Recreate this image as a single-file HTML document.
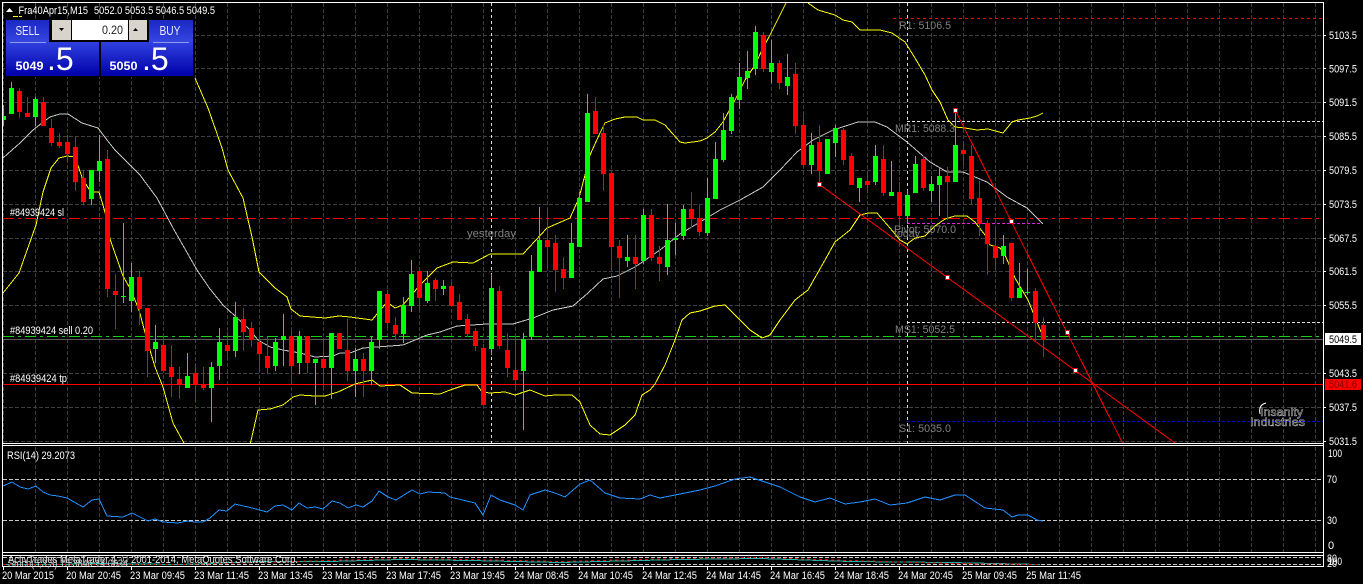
<!DOCTYPE html>
<html><head><meta charset="utf-8"><title>MetaTrader chart</title>
<style>
html,body{margin:0;padding:0;background:#000;width:1363px;height:584px;overflow:hidden}
svg{display:block}
text{font-family:"Liberation Sans",sans-serif;font-size:11px;fill:#fff}
.g{fill:#808080}
</style></head><body>
<svg width="1363" height="584" viewBox="0 0 1363 584" xmlns="http://www.w3.org/2000/svg" shape-rendering="crispEdges">
<defs>
<linearGradient id="bt" x1="0" y1="0" x2="0" y2="1"><stop offset="0" stop-color="#1a28c4"/><stop offset="1" stop-color="#3646e0"/></linearGradient>
<linearGradient id="pr" x1="0" y1="0" x2="0" y2="1"><stop offset="0" stop-color="#3040e0"/><stop offset="1" stop-color="#0000a8"/></linearGradient>
<clipPath id="main"><rect x="3" y="3" width="1320" height="440"/></clipPath>
<clipPath id="rsi"><rect x="3" y="447" width="1320" height="105"/></clipPath>
</defs>

<!-- main grid -->
<g stroke="#404040" stroke-width="1" stroke-dasharray="4 2" fill="none">
<path d="M3 35.5H1323M3 68.5H1323M3 102.5H1323M3 136.5H1323M3 170.5H1323M3 204.5H1323M3 238.5H1323M3 271.5H1323M3 305.5H1323M3 373.5H1323M3 407.5H1323M3 441.5H1323"/>
<path d="M3.5 3V443M35.5 3V443M67.5 3V443M99.5 3V443M131.5 3V443M163.5 3V443M195.5 3V443M227.5 3V443M259.5 3V443M291.5 3V443M323.5 3V443M355.5 3V443M387.5 3V443M419.5 3V443M451.5 3V443M483.5 3V443M515.5 3V443M547.5 3V443M579.5 3V443M611.5 3V443M643.5 3V443M675.5 3V443M707.5 3V443M739.5 3V443M771.5 3V443M803.5 3V443M835.5 3V443M867.5 3V443M899.5 3V443M931.5 3V443M963.5 3V443M995.5 3V443M1027.5 3V443M1059.5 3V443M1091.5 3V443M1123.5 3V443M1155.5 3V443M1187.5 3V443M1219.5 3V443M1251.5 3V443M1283.5 3V443M1315.5 3V443"/>
</g>
<!-- separators -->
<g stroke="#ddd" stroke-width="1" stroke-dasharray="3 3" fill="none">
<path d="M491.5 3V443M907.5 3V443"/>
</g>
<!-- horizontal levels -->
<path d="M3 339.5H1323" stroke="#5a5a5a" stroke-width="1"/>
<path d="M3 336.5H1323" stroke="#18d018" stroke-width="1" stroke-dasharray="11 4 3 4"/>
<path d="M3 218.5H1323" stroke="#ff0000" stroke-width="1" stroke-dasharray="11 4 3 4"/>
<path d="M3 384.5H1323" stroke="#ff0000" stroke-width="1"/>
<path d="M893 18.5H1323" stroke="#ff0000" stroke-width="1" stroke-dasharray="3 3"/>
<path d="M907 121.5H1323" stroke="#e0e0e0" stroke-width="1" stroke-dasharray="3 2"/>
<path d="M907 223.5H1043" stroke="#e020e0" stroke-width="1" stroke-dasharray="3 2"/>
<path d="M907 322.5H1323" stroke="#e0e0e0" stroke-width="1" stroke-dasharray="3 2"/>
<path d="M907 421.5H1323" stroke="#0000e0" stroke-width="1" stroke-dasharray="3 2"/>

<g clip-path="url(#main)" fill="none" stroke-width="1">
<!-- middle band -->
<path stroke="#c8c8c8" d="M3 158L12 150 20 143 33 130 42 123 50 117 60 114 68 114 82 123 98 128 107 140 115 150 133 168 140 175 157 198 173 228 197 270 210 289 223 305 235 316 250 330 258 340 270 347 283 350 300 353 315 357 333 356 340 353 350 353 363 348 377 347 403 345 427 335 440 332 457 326 487 324 513 324 533 318 553 310 573 306 588 293 603 279 617 276 635 267 660 250 680 234 700 222 720 210 740 200 763 187 780 170 797 152 813 140 833 130 858 122 875 122 887 127 907 142 930 162 947 172 963 172 987 182 1007 197 1027 208 1043 224"/>
<!-- bands -->
<path stroke="#ffff00" d="M3 293L19 273 36 225 43 192 51 168 59 158 67 156 75 157 83 180 91 192 99 192 103 205 107 220 110 239 123 276 131 290 139 310 147 340 155 367 163 387 173 423 185 445"/>
<path stroke="#ffff00" d="M195 78L208 108 222 148 228 170 243 198 252 237 259 272 275 288 287 297 291 309 300 316 325 318 339 316 350 317 372 320 387 302 395 308 403 305 420 285 437 268 453 262 473 263 490 254 523 254 547 228 570 218 579 198 585 175 590 155 600 133 605 123 615 119 625 117 637 117 643 120 655 120 665 125 672 133 680 142 685 143 700 141 707 138 715 132 723 122 735 100 745 80 755 65 762 50 770 35 780 15 786 3"/>
<path stroke="#ffff00" d="M808 3L818 10 835 15 843 20 852 22 860 30 880 30 892 33 905 42 915 58 925 75 932 90 940 102 948 120 955 127 965 128 977 130 988 129 1003 133 1012 122 1018 120 1030 118 1037 116 1043 113"/>
<path stroke="#ffff00" d="M250 445L258 410 270 409 283 405 293 397 300 395 315 396 325 396 338 392 355 384 372 380 380 386 400 385 412 393 440 394 450 390 465 385 477 385 482 392 490 393 505 392 515 395 530 390 545 396 555 395 572 395 580 402 590 425 600 434 610 435 625 425 635 415 642 395 650 390 655 384 665 365 675 340 682 320 690 313 700 311 715 306 725 305 735 315 750 330 762 338 770 335 780 320 795 300 808 290 825 260 835 242 850 230 860 215 868 213 877 213 890 228 900 240 907 244 915 238 925 236 935 226 945 219 955 216 967 216 975 222 985 235 990 245 1000 248 1005 255 1015 278 1028 300 1041 332"/>
</g>

<g clip-path="url(#main)">
<!-- green wicks -->
<path fill="none" stroke="#00ff00" stroke-width="1" d="M3.5 105V126M11.5 82V114M35.5 97V126M91.5 170V205M99.5 135V182M123.5 223V303M131.5 263V312M155.5 325V363M187.5 353V388M211.5 362V422M219.5 328V380M235.5 302V357M275.5 338V371M283.5 314V366M299.5 331V374M315.5 359V405M331.5 333V399M355.5 348V397M371.5 336V385M379.5 291V349M403.5 297V343M411.5 260V312M427.5 271V303M443.5 280V295M491.5 274V355M523.5 333V430M531.5 255V340M539.5 207V272M571.5 223V278M579.5 192V247M587.5 94V202M627.5 235V267M643.5 209V264M667.5 204V275M675.5 223V255M683.5 205V240M707.5 178V236M715.5 142V199M723.5 113V162M731.5 94V134M739.5 63V109M747.5 51V89M755.5 26V75M771.5 40V83M787.5 54V95M811.5 133V174M827.5 139V174M835.5 125V157M859.5 178V202M875.5 145V185M891.5 161V196M907.5 190V224M915.5 156V193M931.5 176V202M939.5 167V216M955.5 110V182M1003.5 235V264M1019.5 263V298M1027.5 269V295"/>
<!-- red wicks -->
<path fill="none" stroke="#ff0000" stroke-width="1" d="M19.5 88V118M27.5 97V117M43.5 97V126M51.5 119V146M59.5 133V148M67.5 135V162M75.5 136V191M83.5 170V205M107.5 150V297M115.5 274V329M139.5 271V325M147.5 308V377M163.5 336V371M171.5 345V397M179.5 367V399M195.5 364V401M203.5 367V390M227.5 332V359M243.5 308V351M251.5 322V347M259.5 331V371M267.5 337V374M291.5 331V383M307.5 336V373M323.5 338V389M339.5 333V349M347.5 319V381M363.5 353V397M387.5 290V328M395.5 317V340M419.5 270V310M435.5 278V301M451.5 283V306M459.5 294V320M467.5 314V337M475.5 328V351M483.5 344V405M499.5 286V349M507.5 333V377M515.5 336V389M547.5 208V268M555.5 235V292M563.5 257V289M595.5 97V134M603.5 125V191M611.5 173V270M619.5 240V298M635.5 235V289M651.5 209V261M659.5 246V281M691.5 192V228M699.5 205V236M763.5 32V72M779.5 60V89M795.5 63V134M803.5 113V168M819.5 125V184M843.5 128V165M851.5 153V185M867.5 172V193M883.5 145V196M899.5 182V226M923.5 156V191M947.5 167V220M963.5 141V165M971.5 145V205M979.5 181V236M987.5 220V275M995.5 229V269M1011.5 243V301M1035.5 288V342M1043.5 317V357"/>
<!-- green bodies -->
<path fill="#00ff00" d="M1 116h5V120h-5zM9 88h5V114h-5zM33 99h5V117h-5zM89 170h5V199h-5zM97 161h5V171h-5zM121 296h5V297h-5zM129 277h5V301h-5zM153 342h5V349h-5zM185 376h5V388h-5zM209 367h5V388h-5zM217 342h5V366h-5zM233 317h5V351h-5zM273 342h5V366h-5zM281 336h5V340h-5zM297 336h5V363h-5zM313 359h5V363h-5zM329 333h5V368h-5zM353 359h5V371h-5zM369 342h5V371h-5zM377 291h5V340h-5zM401 305h5V334h-5zM409 274h5V306h-5zM425 283h5V301h-5zM441 286h5V289h-5zM489 288h5V349h-5zM521 339h5V371h-5zM529 271h5V337h-5zM537 240h5V272h-5zM569 243h5V278h-5zM577 198h5V247h-5zM585 113h5V202h-5zM625 257h5V261h-5zM641 215h5V261h-5zM665 240h5V267h-5zM673 238h5V240h-5zM681 209h5V236h-5zM705 198h5V233h-5zM713 159h5V199h-5zM721 130h5V160h-5zM729 97h5V131h-5zM737 77h5V100h-5zM745 71h5V78h-5zM753 32h5V69h-5zM769 63h5V72h-5zM785 77h5V86h-5zM809 145h5V165h-5zM825 139h5V174h-5zM833 128h5V143h-5zM857 178h5V188h-5zM873 156h5V182h-5zM889 192h5V196h-5zM905 195h5V216h-5zM913 164h5V193h-5zM929 184h5V191h-5zM937 176h5V185h-5zM953 145h5V182h-5zM1001 246h5V256h-5zM1017 288h5V298h-5zM1025 292h5V293h-5z"/>
<!-- red bodies -->
<path fill="#ff0000" d="M17 91h5V112h-5zM25 113h5V117h-5zM41 102h5V126h-5zM49 128h5V143h-5zM57 142h5V146h-5zM65 142h5V154h-5zM73 147h5V182h-5zM81 178h5V202h-5zM105 159h5V289h-5zM113 291h5V295h-5zM137 277h5V309h-5zM145 308h5V351h-5zM161 345h5V371h-5zM169 367h5V377h-5zM177 379h5V385h-5zM193 373h5V385h-5zM201 384h5V388h-5zM225 345h5V351h-5zM241 319h5V332h-5zM249 328h5V340h-5zM257 342h5V354h-5zM265 356h5V368h-5zM289 336h5V366h-5zM305 336h5V363h-5zM321 359h5V368h-5zM337 333h5V349h-5zM345 350h5V371h-5zM361 359h5V371h-5zM385 294h5V323h-5zM393 325h5V334h-5zM417 271h5V298h-5zM433 280h5V289h-5zM449 286h5V306h-5zM457 302h5V320h-5zM465 319h5V334h-5zM473 331h5V346h-5zM481 348h5V405h-5zM497 291h5V346h-5zM505 350h5V368h-5zM513 370h5V380h-5zM545 240h5V247h-5zM553 243h5V270h-5zM561 269h5V278h-5zM593 111h5V134h-5zM601 133h5V174h-5zM609 173h5V247h-5zM617 246h5V258h-5zM633 257h5V264h-5zM649 215h5V258h-5zM657 257h5V264h-5zM689 209h5V218h-5zM697 218h5V232h-5zM761 35h5V69h-5zM777 63h5V83h-5zM793 74h5V126h-5zM801 125h5V165h-5zM817 142h5V171h-5zM841 130h5V160h-5zM849 156h5V185h-5zM865 181h5V185h-5zM881 159h5V193h-5zM897 192h5V216h-5zM921 159h5V188h-5zM945 176h5V182h-5zM961 150h5V154h-5zM969 156h5V199h-5zM977 198h5V224h-5zM985 223h5V244h-5zM993 246h5V258h-5zM1009 243h5V298h-5zM1033 291h5V323h-5zM1041 325h5V340h-5z"/>
<!-- trendlines -->
<g fill="none" stroke="#ff0000" stroke-width="1">
<path d="M955.5 110.5L1122.5 443"/>
<path d="M819.5 184.5L1175 443"/>
</g>
<g fill="#fff" stroke="#ff0000" stroke-width="1">
<rect x="953.5" y="108.5" width="4" height="4"/>
<rect x="1009.5" y="219.5" width="4" height="4"/>
<rect x="1065.5" y="330.5" width="4" height="4"/>
<rect x="817.5" y="182.5" width="4" height="4"/>
<rect x="945.5" y="275.5" width="4" height="4"/>
<rect x="1073.5" y="368.5" width="4" height="4"/>
</g>
</g>

<!-- frame -->
<g fill="none" stroke="#fff" stroke-width="1">
<path d="M2.5 567V2.5H1323.5V567"/>
<path d="M3 443.5H1323M3 445.5H1323M3 552.5H1323M3 555.5H1323M3 566.5H1323"/>
</g>
<!-- price ticks -->
<path stroke="#fff" stroke-width="1" d="M1324 35.5h2M1324 68.5h2M1324 102.5h2M1324 136.5h2M1324 170.5h2M1324 204.5h2M1324 238.5h2M1324 271.5h2M1324 305.5h2M1324 373.5h2M1324 407.5h2M1324 441.5h2"/>
<!-- time ticks -->
<path stroke="#fff" stroke-width="1" d="M3.5 567v3M67.5 567v3M131.5 567v3M195.5 567v3M259.5 567v3M323.5 567v3M387.5 567v3M451.5 567v3M515.5 567v3M579.5 567v3M643.5 567v3M707.5 567v3M771.5 567v3M835.5 567v3M899.5 567v3M963.5 567v3M1027.5 567v3"/>

<!-- RSI panel -->
<path stroke="#404040" stroke-width="1" stroke-dasharray="4 2" fill="none" d="M35.5 447V552M67.5 447V552M99.5 447V552M131.5 447V552M163.5 447V552M195.5 447V552M227.5 447V552M259.5 447V552M291.5 447V552M323.5 447V552M355.5 447V552M387.5 447V552M419.5 447V552M451.5 447V552M483.5 447V552M515.5 447V552M547.5 447V552M579.5 447V552M611.5 447V552M643.5 447V552M675.5 447V552M707.5 447V552M739.5 447V552M771.5 447V552M803.5 447V552M835.5 447V552M867.5 447V552M899.5 447V552M931.5 447V552M963.5 447V552M995.5 447V552M1027.5 447V552M1059.5 447V552M1091.5 447V552M1123.5 447V552M1155.5 447V552M1187.5 447V552M1219.5 447V552M1251.5 447V552M1283.5 447V552M1315.5 447V552"/>
<path stroke="#c8c8c8" stroke-width="1" stroke-dasharray="4 2" fill="none" d="M3 479.5H1323M3 520.5H1323"/>
<path fill="none" stroke="#1e90ff" stroke-width="1" d="M3 486L12 482 20 487 28 489 36 486 43 492 50 495 58 496 67 498 83 507 92 500 99 499 107 516 123 517 132 513 148 521 155 519 163 522 178 523 187 521 195 522 203 522 210 518 219 510 227 511 235 504 252 508 267 512 275 506 283 505 292 510 299 503 307 508 315 507 323 509 332 501 340 503 348 508 356 505 363 507 372 501 379 491 388 497 396 500 412 490 420 494 428 492 445 493 450 497 475 503 483 515 491 495 500 500 515 505 523 510 530 495 545 490 555 493 565 497 580 484 590 480 605 493 620 498 640 499 650 495 660 498 680 494 700 490 715 486 735 479 750 477 765 482 780 487 800 497 815 502 830 498 845 504 860 502 875 499 890 505 907 503 925 497 940 500 955 495 965 495 985 508 1003 510 1012 517 1018 515 1028 515 1037 520 1043 521"/>

<!-- stoch panel -->
<path stroke="#c8c8c8" stroke-width="1" stroke-dasharray="4 2" fill="none" d="M3 557.5H1323M3 564.5H1323"/>
<path fill="none" stroke="#20b2aa" stroke-width="1" d="M3 564.5H60L100 563.5 180 564.5 260 561.5 330 561.5 400 559.5 470 560.5 560 562.5 680 559.5 760 558.5 850 561.5 950 562.5 1040 564.5"/>
<path fill="none" stroke="#ff0000" stroke-width="1" stroke-dasharray="3 3" d="M3 564.5H60L100 564.5 180 564.5 260 562.5 330 560.5 400 558.5 470 559.5 560 561.5 680 558.5 760 557.5 850 560.5 950 563.5 1040 564.5"/>

<!-- chart object labels -->
<g shape-rendering="auto">
<text class="g" x="899" y="29" textLength="52" lengthAdjust="spacingAndGlyphs">R1: 5106.5</text>
<text class="g" x="895" y="132" textLength="60" lengthAdjust="spacingAndGlyphs">MR1: 5088.3</text>
<text class="g" x="894" y="233" textLength="62" lengthAdjust="spacingAndGlyphs">Pivot: 5070.0</text>
<text class="g" x="894" y="237" textLength="26" lengthAdjust="spacingAndGlyphs">today</text>
<text class="g" x="895" y="333" textLength="60" lengthAdjust="spacingAndGlyphs">MS1: 5052.5</text>
<text class="g" x="899" y="432" textLength="52" lengthAdjust="spacingAndGlyphs">S1: 5035.0</text>
<text class="g" x="467" y="237" textLength="49" lengthAdjust="spacingAndGlyphs">yesterday</text>
<text x="10" y="216" textLength="54" lengthAdjust="spacingAndGlyphs">#84939424 sl</text>
<text x="10" y="334" textLength="83" lengthAdjust="spacingAndGlyphs">#84939424 sell 0.20</text>
<text x="10" y="382" textLength="57" lengthAdjust="spacingAndGlyphs">#84939424 tp</text>

<!-- logo -->
<path d="M1260 414Q1258 405 1266 403" fill="none" stroke="#fff" stroke-width="1"/>
<text x="1260" y="416" textLength="43" lengthAdjust="spacingAndGlyphs" style="fill:#000;stroke:#fff;stroke-width:.35px;font-size:12px">Insanity</text>
<text x="1250" y="426" textLength="55" lengthAdjust="spacingAndGlyphs" style="fill:#000;stroke:#fff;stroke-width:.35px;font-size:12px">Industries</text>

<!-- title -->
<text x="18.5" y="14" textLength="69.5" lengthAdjust="spacingAndGlyphs">Fra40Apr15,M15</text>
<text x="94" y="14" textLength="121" lengthAdjust="spacingAndGlyphs">5052.0 5053.5 5046.5 5049.5</text>
<path d="M6 12L9.5 8 13 12z" fill="#fff"/>
<path d="M13 16.5H22" stroke="#ffff00" stroke-width="1" stroke-dasharray="5 1"/>

<!-- price axis -->
<text x="1329" y="39" textLength="28" lengthAdjust="spacingAndGlyphs">5103.5</text>
<text x="1329" y="72.500" textLength="28" lengthAdjust="spacingAndGlyphs">5097.5</text>
<text x="1329" y="106" textLength="28" lengthAdjust="spacingAndGlyphs">5091.5</text>
<text x="1329" y="140" textLength="28" lengthAdjust="spacingAndGlyphs">5085.5</text>
<text x="1329" y="174" textLength="28" lengthAdjust="spacingAndGlyphs">5079.5</text>
<text x="1329" y="208" textLength="28" lengthAdjust="spacingAndGlyphs">5073.5</text>
<text x="1329" y="242" textLength="28" lengthAdjust="spacingAndGlyphs">5067.5</text>
<text x="1329" y="275" textLength="28" lengthAdjust="spacingAndGlyphs">5061.5</text>
<text x="1329" y="309" textLength="28" lengthAdjust="spacingAndGlyphs">5055.5</text>
<text x="1329" y="377" textLength="28" lengthAdjust="spacingAndGlyphs">5043.5</text>
<text x="1329" y="411" textLength="28" lengthAdjust="spacingAndGlyphs">5037.5</text>
<text x="1329" y="445" textLength="28" lengthAdjust="spacingAndGlyphs">5031.5</text>
<rect x="1325" y="333" width="36" height="12" fill="#fff" shape-rendering="crispEdges"/>
<text x="1329" y="343" textLength="28" lengthAdjust="spacingAndGlyphs" style="fill:#000">5049.5</text>
<rect x="1325" y="379" width="36" height="11" fill="#ff0000" shape-rendering="crispEdges"/>
<text x="1329" y="388" textLength="28" lengthAdjust="spacingAndGlyphs" style="fill:#800000">5041.6</text>

<!-- RSI labels -->
<text x="7" y="459" textLength="68" lengthAdjust="spacingAndGlyphs">RSI(14) 29.2073</text>
<text x="1328" y="457" textLength="14" lengthAdjust="spacingAndGlyphs">100</text>
<text x="1327" y="483" textLength="10" lengthAdjust="spacingAndGlyphs">70</text>
<text x="1327" y="524" textLength="10" lengthAdjust="spacingAndGlyphs">30</text>
<text x="1328" y="549">0</text>

<!-- stoch labels -->
<text x="8" y="563" textLength="290" lengthAdjust="spacingAndGlyphs" style="fill:#e8e8e8">ActivTrades MetaTrader 4, © 2001-2014, MetaQuotes Software Corp.</text>
<text x="8" y="567" textLength="120" lengthAdjust="spacingAndGlyphs" style="fill:#d0d0d0">Stoch(5,3,3) 15.3846 14.0634</text>
<text x="1327" y="562" textLength="10" lengthAdjust="spacingAndGlyphs">80</text>
<text x="1327" y="567" textLength="10" lengthAdjust="spacingAndGlyphs">20</text>
<text x="1328" y="565" textLength="14" lengthAdjust="spacingAndGlyphs">100</text>

<!-- time axis -->
<text x="2" y="579" textLength="52" lengthAdjust="spacingAndGlyphs">20 Mar 2015</text>
<text x="66" y="579" textLength="55" lengthAdjust="spacingAndGlyphs">20 Mar 20:45</text>
<text x="130" y="579" textLength="55" lengthAdjust="spacingAndGlyphs">23 Mar 09:45</text>
<text x="194" y="579" textLength="55" lengthAdjust="spacingAndGlyphs">23 Mar 11:45</text>
<text x="258" y="579" textLength="55" lengthAdjust="spacingAndGlyphs">23 Mar 13:45</text>
<text x="322" y="579" textLength="55" lengthAdjust="spacingAndGlyphs">23 Mar 15:45</text>
<text x="386" y="579" textLength="55" lengthAdjust="spacingAndGlyphs">23 Mar 17:45</text>
<text x="450" y="579" textLength="55" lengthAdjust="spacingAndGlyphs">23 Mar 19:45</text>
<text x="514" y="579" textLength="55" lengthAdjust="spacingAndGlyphs">24 Mar 08:45</text>
<text x="578" y="579" textLength="55" lengthAdjust="spacingAndGlyphs">24 Mar 10:45</text>
<text x="642" y="579" textLength="55" lengthAdjust="spacingAndGlyphs">24 Mar 12:45</text>
<text x="706" y="579" textLength="55" lengthAdjust="spacingAndGlyphs">24 Mar 14:45</text>
<text x="770" y="579" textLength="55" lengthAdjust="spacingAndGlyphs">24 Mar 16:45</text>
<text x="834" y="579" textLength="55" lengthAdjust="spacingAndGlyphs">24 Mar 18:45</text>
<text x="898" y="579" textLength="55" lengthAdjust="spacingAndGlyphs">24 Mar 20:45</text>
<text x="962" y="579" textLength="55" lengthAdjust="spacingAndGlyphs">25 Mar 09:45</text>
<text x="1026" y="579" textLength="55" lengthAdjust="spacingAndGlyphs">25 Mar 11:45</text>
</g>

<!-- one-click trading panel -->
<rect x="5" y="19" width="190" height="58" fill="#000"/>
<rect x="6" y="20" width="43" height="22" fill="url(#bt)"/>
<rect x="149" y="20" width="44" height="22" fill="url(#bt)"/>
<rect x="6" y="42" width="93" height="34" fill="url(#pr)"/>
<rect x="101" y="42" width="92" height="34" fill="url(#pr)"/>
<rect x="10" y="42" width="36" height="1" fill="#8c9ae8"/>
<rect x="153" y="42" width="36" height="1" fill="#8c9ae8"/>
<rect x="52" y="20" width="19" height="20" fill="#d8d4cc"/>
<rect x="72" y="20" width="56" height="20" fill="#fff"/>
<rect x="129" y="20" width="18" height="20" fill="#d8d4cc"/>
<path d="M59 28h5l-2.500 3z" fill="#000" shape-rendering="auto"/>
<path d="M133 31h5l-2.500-3z" fill="#000" shape-rendering="auto"/>
<g shape-rendering="auto">
<text x="102" y="34" textLength="21" lengthAdjust="spacingAndGlyphs" style="font-size:12px;fill:#222">0.20</text>
<text x="15.500" y="35" textLength="24" lengthAdjust="spacingAndGlyphs" style="font-size:13px;fill:#e8ecff">SELL</text>
<text x="159.500" y="35" textLength="21" lengthAdjust="spacingAndGlyphs" style="font-size:13px;fill:#e8ecff">BUY</text>
<text x="15.500" y="70" textLength="28" lengthAdjust="spacingAndGlyphs" style="font-size:12px;font-weight:bold">5049</text>
<text x="47" y="70" style="font-size:32px">.5</text>
<text x="109.500" y="70" textLength="28" lengthAdjust="spacingAndGlyphs" style="font-size:12px;font-weight:bold">5050</text>
<text x="142" y="70" style="font-size:32px">.5</text>
</g>
</svg>
</body></html>
